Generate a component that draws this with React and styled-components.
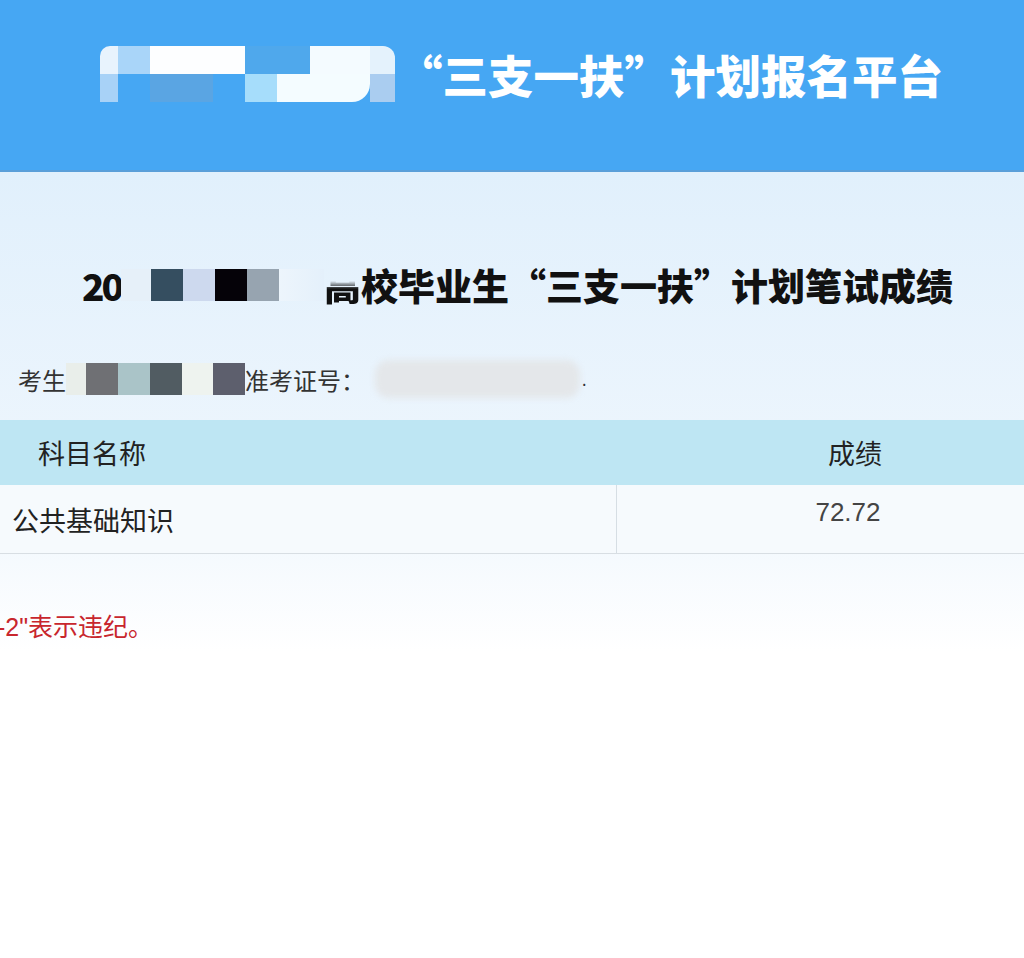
import React from 'react';
import styled, { createGlobalStyle } from 'styled-components';

const GlobalStyle = createGlobalStyle`
	html, body {
		margin: 0;
		padding: 0;
		background: #ffffff;
		overflow: hidden;
	}

	body {
		font-family: "Noto Sans CJK SC", "Noto Sans", sans-serif;
	}
`;

const Page = styled.div`
	width: 1024px;
	height: 958px;
	overflow: hidden;
	background: #ffffff;
`;

const Header = styled.header`
	height: 172px;
	padding: 46px 0 0 100px;
	box-sizing: border-box;
	display: flex;
	align-items: flex-start;
	background: #46a7f3;
	border-bottom: 2px solid #5a9fd9;
`;

const HeaderTitle = styled.h1`
	margin: 0 0 0 2px;
	font-size: 45.5px;
	line-height: 56px;
	font-weight: 900;
	color: #ffffff;
	white-space: nowrap;
`;

const Main = styled.main`
	background: linear-gradient(180deg, #e1f0fc 0%, #eef6fd 40%, #ffffff 480px);
	padding-bottom: 320px;
`;

const ScoreTitle = styled.h2`
	margin: 0;
	padding: 88px 0 0 82px;
	display: flex;
	align-items: center;
	font-size: 37px;
	line-height: 50px;
	font-weight: 900;
	color: #111111;
	white-space: nowrap;
`;

const Digits = styled.span`
	letter-spacing: -3px;
`;

const Faded = styled.span`
	display: inline-block;
	mask-image: linear-gradient(180deg, transparent 42%, #000 58%);
	-webkit-mask-image: linear-gradient(180deg, transparent 42%, #000 58%);
`;

const InfoLine = styled.div`
	margin-top: 49px;
	padding-left: 18px;
	display: flex;
	align-items: center;
	height: 40px;
	font-size: 24px;
	color: #333333;
	white-space: nowrap;
`;

const Smudge = styled.span`
	display: inline-block;
	width: 205px;
	height: 38px;
	margin-left: 10px;
	background: #e4e7ea;
	border-radius: 14px;
	filter: blur(3px);
`;

const Dot = styled.span`
	margin-left: 2px;
	font-size: 16px;
	color: #222;
`;

const MosaicRow = styled.span`
	display: inline-flex;
	flex-shrink: 0;
`;

const MosaicStack = styled.span`
	display: inline-flex;
	flex-direction: column;
	flex-shrink: 0;
`;

const Tile = styled.span`
	display: inline-block;
	width: ${p => p.$w}px;
	height: ${p => p.$h}px;
	background: ${p => p.$c};
	border-radius: ${p => p.$r || 0};
`;

const Mosaic = ({ tiles, h }) => (
	<MosaicRow>
		{tiles.map(([w, c, r], i) => (
			<Tile key={i} $w={w} $h={h} $c={c} $r={r} />
		))}
	</MosaicRow>
);

const Table = styled.div`
	margin-top: 21px;
	width: 1093px;
	border-bottom: 1px solid #d8dee3;
`;

const Row = styled.div`
	display: grid;
	grid-template-columns: 617px 1fr;
	height: ${p => p.$h}px;
	background: ${p => p.$bg};
`;

const Cell = styled.div`
	display: flex;
	align-items: ${p => (p.$top ? 'flex-start' : 'center')};
	justify-content: ${p => (p.$center ? 'center' : 'flex-start')};
	padding-left: ${p => p.$pl || 0}px;
	padding-right: ${p => p.$pr || 0}px;
	padding-top: ${p => p.$pt || 0}px;
	border-right: ${p => (p.$divider ? '1px solid #d6dee4' : 'none')};
	font-size: 27px;
	color: #222222;
`;

const Score = styled.span`
	font-family: "Liberation Sans", "Noto Sans CJK SC", sans-serif;
	font-size: 26px;
	color: #444444;
	line-height: 30px;
`;

const Note = styled.p`
	margin: 58px 0 0 -3px;
	font-family: "Liberation Sans", "Noto Sans CJK SC", sans-serif;
	font-size: 25px;
	line-height: 30px;
	color: #c8262d;
	white-space: nowrap;
`;

const headerTop = [
	[18, '#e8f3fd', '10px 0 0 0'],
	[32, '#a9d5f9'],
	[95, '#fdfeff'],
	[65, '#4fa8ec'],
	[60, '#f4fbff'],
	[25, '#e4f2fc', '0 12px 0 0'],
];

const headerBottom = [
	[18, '#a8d2f7'],
	[32, '#46a7f3'],
	[63, '#5aa5e3'],
	[32, '#46a7f3'],
	[32, '#a6ddfb'],
	[93, '#f4fcff', '0 0 18px 0'],
	[25, '#aacdf0'],
];

const titleTiles = [
	[30, '#e6f0f9'],
	[32, '#354e60'],
	[32, '#cdd9ee'],
	[32, '#050208'],
	[32, '#97a4b0'],
	[45, 'linear-gradient(90deg, #edf5fc, #e4f0fb)'],
];

const nameTiles = [
	[20, '#e9eeea'],
	[32, '#6f7074'],
	[32, '#aac4c8'],
	[32, '#515c62'],
	[31, '#eef3ef'],
	[32, '#5d5f6d'],
];

const App = () => {
	return (
		<Page>
			<GlobalStyle />
			<Header>
				<MosaicStack>
					<Mosaic tiles={headerTop} h={28} />
					<Mosaic tiles={headerBottom} h={28} />
				</MosaicStack>
				<HeaderTitle>“三支一扶”计划报名平台</HeaderTitle>
			</Header>

			<Main>
				<ScoreTitle>
					<Digits>20</Digits>
					<Mosaic tiles={titleTiles} h={32} />
					<Faded>高</Faded>
					校毕业生“三支一扶”计划笔试成绩
				</ScoreTitle>

				<InfoLine>
					考生
					<Mosaic tiles={nameTiles} h={32} />
					准考证号：
					<Smudge />
					<Dot>.</Dot>
				</InfoLine>

				<Table>
					<Row $h={65} $bg='#bee6f3'>
						<Cell $pl={38}>科目名称</Cell>
						<Cell $center>成绩</Cell>
					</Row>
					<Row $h={68} $bg='#f6fafd'>
						<Cell $pl={12} $divider>公共基础知识</Cell>
						<Cell $center $top $pt={12} $pr={14}>
							<Score>72.72</Score>
						</Cell>
					</Row>
				</Table>

				<Note>-2"表示违纪。</Note>
			</Main>
		</Page>
	);
};

export default App;
